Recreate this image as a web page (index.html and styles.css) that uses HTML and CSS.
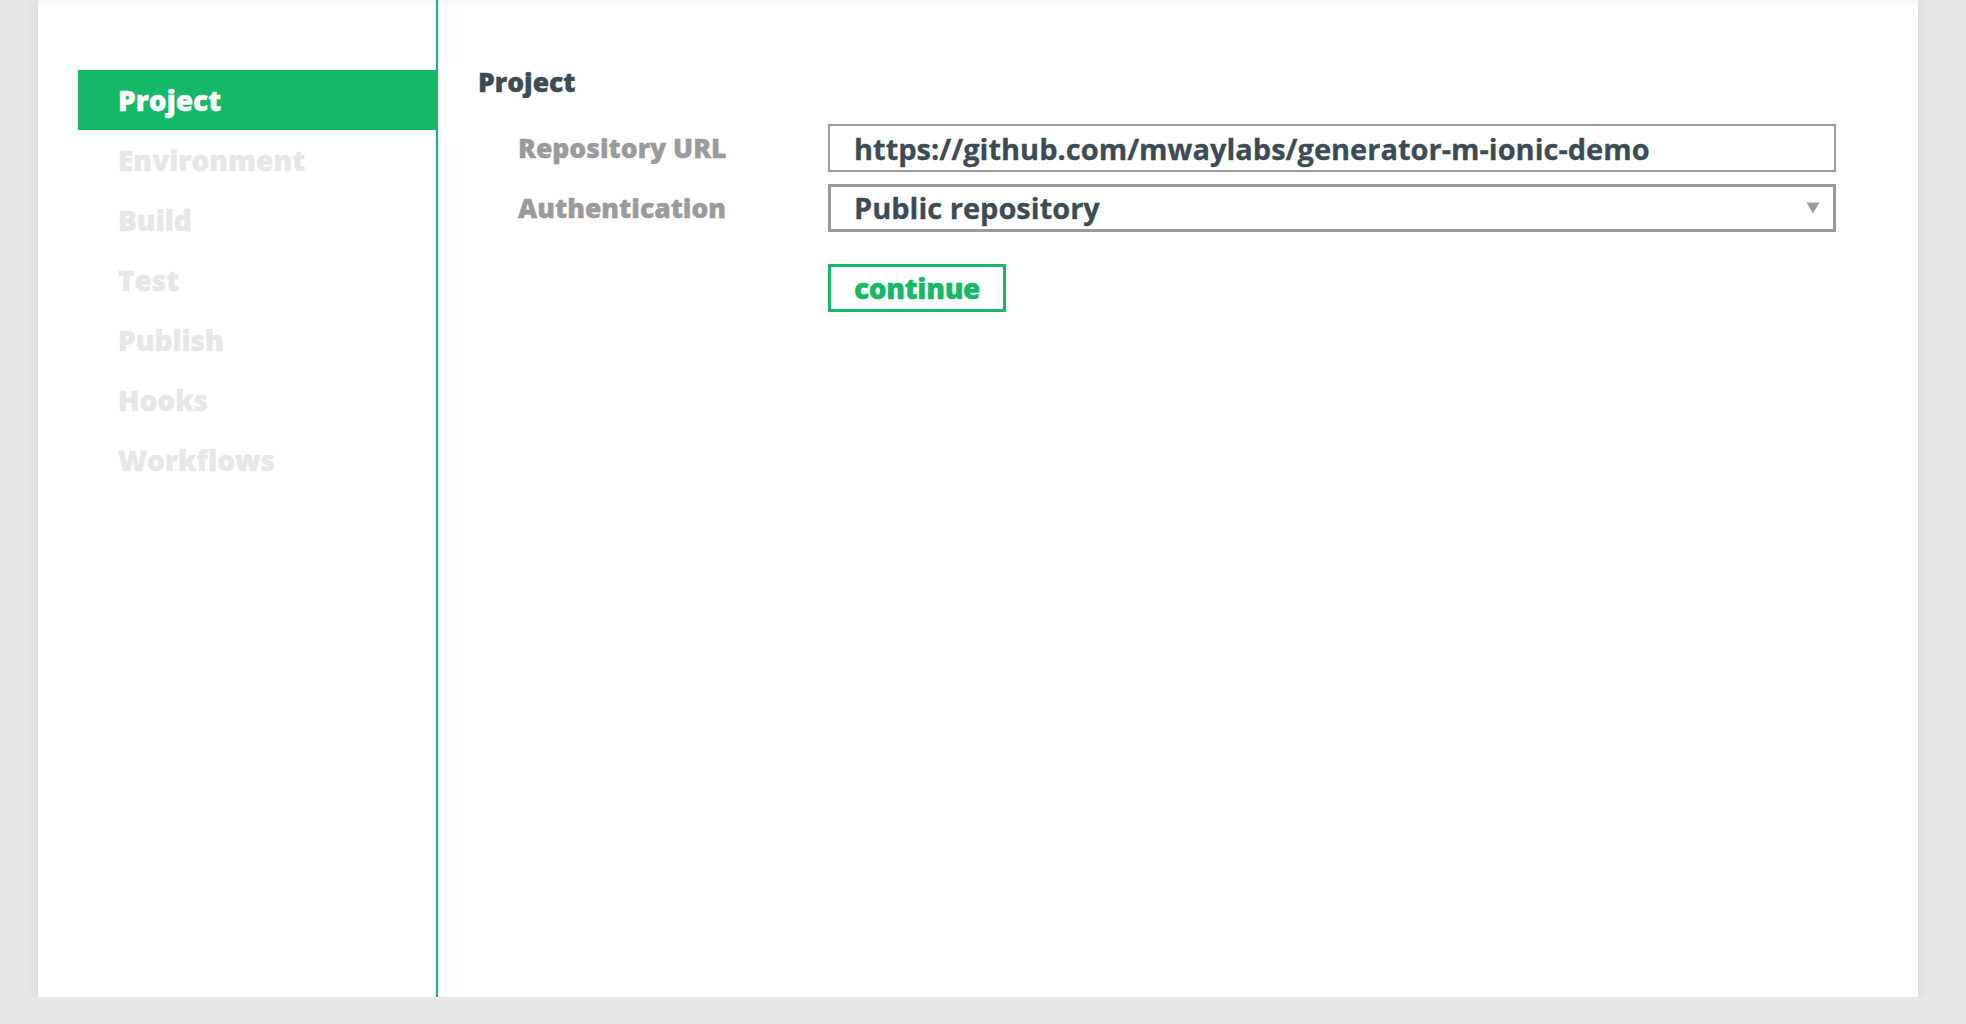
FILE: index.html
```html
<!DOCTYPE html>
<html lang="en">
<head>
<meta charset="utf-8">
<title>Project</title>
<link rel="stylesheet" href="styles.css">
</head>
<body>
<div class="page">
  <div class="card">
    <nav class="sidebar">
      <div class="nav-item active">Project</div>
      <div class="nav-item">Environment</div>
      <div class="nav-item">Build</div>
      <div class="nav-item">Test</div>
      <div class="nav-item">Publish</div>
      <div class="nav-item">Hooks</div>
      <div class="nav-item">Workflows</div>
    </nav>
    <main class="main">
      <h2 class="heading">Project</h2>
      <div class="form-row">
        <label class="label">Repository URL</label>
        <input class="text-input" type="text" value="https://github.com/mwaylabs/generator-m-ionic-demo">
      </div>
      <div class="form-row">
        <label class="label">Authentication</label>
        <div class="select">
          <span class="select-value">Public repository</span>
          <svg class="select-arrow" width="14" height="12" viewBox="0 0 14 12"><path d="M0.5 0.5 H13.5 L7 11.5 Z" fill="#9b9b9b"/></svg>
        </div>
      </div>
      <div class="actions">
        <button class="btn-continue" type="button">continue</button>
      </div>
    </main>
  </div>
</div>
</body>
</html>
```

FILE: styles.css
```css
html, body {
  margin: 0;
  padding: 0;
}
body {
  background: #e7e7e7;
  font-family: "Open Sans", "Liberation Sans", sans-serif;
  overflow: hidden;
}
.page {
  padding-left: 38px;
}
.card {
  display: flex;
  width: 1880px;
  height: 997px;
  background: #ffffff;
  box-shadow: 0 2px 14px rgba(0, 0, 0, 0.09), inset 0 10px 10px -8px rgba(0, 0, 0, 0.05);
}
.sidebar {
  width: 400px;
  box-sizing: border-box;
  border-right: 2px solid #15b866;
  padding-top: 70px;
}
.nav-item {
  margin-left: 40px;
  height: 60px;
  line-height: 60px;
  padding-left: 40px;
  font-size: 28px;
  font-weight: 800;
  color: #e7e7e7;
  -webkit-text-stroke: 0.4px #e7e7e7;
}
.nav-item.active {
  background: #15b866;
  color: #ffffff;
  -webkit-text-stroke: 0.4px #ffffff;
}
.main {
  flex: 1;
  padding: 62px 82px 0 40px;
}
.heading {
  margin: 0 0 22px 0;
  font-size: 26.5px;
  line-height: 40px;
  font-weight: 800;
  color: #3d4b55;
  -webkit-text-stroke: 0.4px #3d4b55;
}
.form-row {
  display: flex;
  align-items: center;
  margin-bottom: 12px;
}
.label {
  width: 350px;
  box-sizing: border-box;
  padding-left: 40px;
  font-size: 26.5px;
  line-height: 48px;
  font-weight: 800;
  color: #9b9b9b;
  -webkit-text-stroke: 0.4px #9b9b9b;
}
.text-input {
  -webkit-appearance: none;
  appearance: none;
  width: 1008px;
  height: 48px;
  box-sizing: border-box;
  margin: 0;
  border: 2px solid #9b9b9b;
  border-radius: 0;
  padding: 0 0 0 24px;
  font-family: "Open Sans", "Liberation Sans", sans-serif;
  font-size: 29px;
  font-weight: 700;
  color: #3d4b55;
  -webkit-text-stroke: 0.3px #3d4b55;
  outline: none;
  background: #ffffff;
}
.select {
  width: 1008px;
  height: 48px;
  box-sizing: border-box;
  border: 3px solid #9b9b9b;
  display: flex;
  align-items: center;
  justify-content: space-between;
  padding: 0 13px 0 23px;
}
.select-value {
  font-size: 29px;
  font-weight: 700;
  color: #3d4b55;
  -webkit-text-stroke: 0.3px #3d4b55;
  line-height: 42px;
}
.select-arrow {
  display: block;
}
.actions {
  margin-top: 32px;
  padding-left: 350px;
}
.btn-continue {
  height: 48px;
  box-sizing: border-box;
  margin: 0;
  border: 3px solid #15b866;
  border-radius: 0;
  background: #ffffff;
  padding: 0 23px;
  font-family: "Open Sans", "Liberation Sans", sans-serif;
  font-size: 28px;
  font-weight: 800;
  color: #15b866;
  -webkit-text-stroke: 0.4px #15b866;
  line-height: 42px;
  letter-spacing: -0.3px;
  cursor: pointer;
}
```
